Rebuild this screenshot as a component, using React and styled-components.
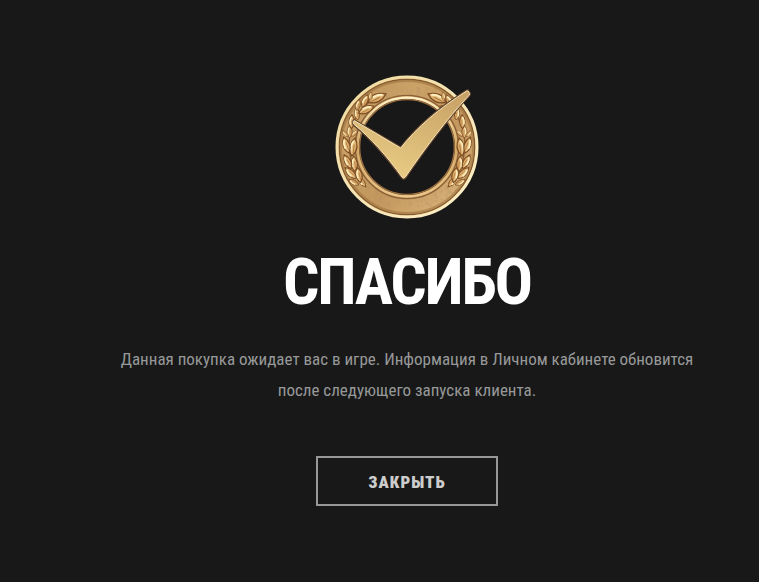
import React from "react";
import styled, { createGlobalStyle } from "styled-components";

const GlobalStyle = createGlobalStyle`
  *,
  *::before,
  *::after {
    box-sizing: border-box;
  }
  body {
    margin: 0;
    background-color: #181818;
    font-family: "Roboto Condensed", Roboto, "Liberation Sans", sans-serif;
  }
`;

const StyledPage = styled.main`
  display: flex;
  flex-direction: column;
  align-items: center;
  min-height: 100vh;
  padding: 75px 0 72px 55px;
  text-align: center;
`;

const StyledEmblem = styled.svg`
  display: block;
  width: 144px;
  height: 144px;
`;

const StyledTitle = styled.h1`
  margin: 26px 0 0;
  font-size: 64px;
  font-weight: bold;
  line-height: 76px;
  letter-spacing: -2px;
  color: #ffffff;
  text-transform: uppercase;
`;

const StyledText = styled.p`
  max-width: 600px;
  margin: 23px 0 0;
  font-size: 17px;
  line-height: 31px;
  color: #979899;
`;

const StyledButton = styled.button`
  min-width: 182px;
  height: 50px;
  margin-top: 50px;
  padding: 2px 24px 0;
  border: 2px solid #979797;
  background: transparent;
  font-family: inherit;
  font-size: 17px;
  font-weight: 900;
  line-height: 20px;
  letter-spacing: 1px;
  color: #cccccc;
  text-transform: uppercase;
  cursor: pointer;

  &:hover {
    border-color: #ffffff;
    color: #ffffff;
  }
`;

// x, y, rotation and scale of every leaf on the left branch
const leaves = [
  [110, 350, -38, 0.9],
  [86, 352, -62, 0.8],
  [102, 330, -12, 1.1],
  [77, 324, -45, 1.1],
  [88, 296, -4, 1.1],
  [68, 290, -28, 1.1],
  [85, 246, 10, 1.3],
  [64, 240, -18, 1.2],
  [74, 200, 0, 0.9],
  [61, 206, -46, 0.6],
  [88, 206, 48, 0.6],
  [80, 170, 2, 1],
  [96, 146, -8, 0.9],
  [124, 134, 66, 1.2],
  [99, 120, 14, 0.8],
  [120, 108, 24, 1],
  [156, 99, 66, 1.4],
  [137, 94, 6, 0.6],
];

const Branch = () => (
  <g>
    <path
      d="M124 367 Q70 318 73 225 Q76 160 140 104"
      fill="none"
      stroke="#8d5f30"
      strokeWidth="4"
    />
    {leaves.map(([x, y, angle, scale]) => (
      <g
        key={`${x}-${y}`}
        transform={`translate(${x} ${y}) rotate(${angle}) scale(${scale})`}
      >
        <path
          d="M0 21 C-13 7 -9 -10 0 -21 C9 -10 13 7 0 21Z"
          fill="url(#leaf)"
          stroke="#7d4e24"
          strokeWidth="3"
        />
        <path
          d="M-5 8 Q-7 -5 -1 -14"
          fill="none"
          stroke="#fff0c0"
          strokeWidth="4"
        />
        <path d="M2 14 L1 -6" fill="none" stroke="#ae783c" strokeWidth="2" />
      </g>
    ))}
  </g>
);

const Emblem = () => (
  <StyledEmblem viewBox="30 30 432 432" aria-hidden="true">
    <defs>
      <linearGradient id="metal" x1="0" y1="0" x2="1" y2="1">
        <stop offset="0" stopColor="#c0965d" />
        <stop offset="0.3" stopColor="#cba267" />
        <stop offset="0.6" stopColor="#c4975d" />
        <stop offset="1" stopColor="#dab67e" />
      </linearGradient>
      <linearGradient id="rim" x1="0" y1="0" x2="1" y2="1">
        <stop offset="0" stopColor="#f0d99d" />
        <stop offset="0.5" stopColor="#f5e4b5" />
        <stop offset="1" stopColor="#fff0c7" />
      </linearGradient>
      <linearGradient id="innerRim" x1="0" y1="0" x2="0" y2="1">
        <stop offset="0" stopColor="#fff0c4" />
        <stop offset="0.5" stopColor="#d5a965" />
        <stop offset="1" stopColor="#e9c68a" />
      </linearGradient>
      <linearGradient id="leaf" x1="0" y1="0" x2="1" y2="0">
        <stop offset="0" stopColor="#f8dca0" />
        <stop offset="1" stopColor="#d09a58" />
      </linearGradient>
      <linearGradient id="tick" x1="0.8" y1="0" x2="0.4" y2="1">
        <stop offset="0" stopColor="#c9a267" />
        <stop offset="0.5" stopColor="#d8b775" />
        <stop offset="1" stopColor="#e8cb83" />
      </linearGradient>
      <filter id="grain" x="0" y="0" width="1" height="1">
        <feTurbulence
          type="fractalNoise"
          baseFrequency="0.08"
          numOctaves="2"
          seed="4"
        />
        <feColorMatrix values="0 0 0 0 0.45  0 0 0 0 0.28  0 0 0 0 0.12  0 0 0 1.2 -0.5" />
        <feComposite in2="SourceGraphic" operator="in" />
      </filter>
    </defs>

    <g fill="none">
      <circle cx="246" cy="246" r="178" stroke="url(#metal)" strokeWidth="68" />
      <circle
        cx="246"
        cy="246"
        r="178"
        stroke="#000000"
        strokeWidth="60"
        filter="url(#grain)"
      />
      <circle
        cx="246"
        cy="246"
        r="198"
        stroke="#976a37"
        strokeOpacity="0.5"
        strokeWidth="6"
      />
      <circle cx="246" cy="246" r="203" stroke="#845a2c" strokeWidth="4" />
      <circle cx="246" cy="246" r="210" stroke="url(#rim)" strokeWidth="9" />
      <circle cx="246" cy="246" r="155" stroke="#8a5f34" strokeWidth="4" />
      <circle
        cx="246"
        cy="246"
        r="148"
        stroke="url(#innerRim)"
        strokeWidth="7"
      />
      <circle cx="246" cy="246" r="142" stroke="#9c6f3f" strokeWidth="4" />
    </g>

    <Branch />
    <g transform="translate(492 0) scale(-1 1)">
      <Branch />
    </g>

    <path
      d="M91 166 L227 246 C275 185 340 128 424 76 L429 75 L436 85 L434 92 C366 165 302 252 243 338 Q236 347 229 338 C184 276 137 222 85 180 L82 171 L86 165Z"
      fill="#63452b"
      stroke="#63452b"
      strokeWidth="4"
      strokeLinejoin="round"
    />
    <path
      d="M90 168 L227 249 C275 188 341 131 425 78 L429 78 L434 86 L432 91 C364 164 300 250 241 336 Q236 343 231 336 C186 274 139 220 87 178 L84 171 L87 167Z"
      fill="url(#tick)"
      stroke="#f7e6ba"
      strokeWidth="3"
      strokeLinejoin="round"
    />
  </StyledEmblem>
);

const App = () => {
  return (
    <>
      <GlobalStyle />
      <StyledPage>
        <Emblem />
        <StyledTitle>Спасибо</StyledTitle>
        <StyledText>
          Данная покупка ожидает вас в игре. Информация в Личном кабинете
          обновится после следующего запуска клиента.
        </StyledText>
        <StyledButton type="button">Закрыть</StyledButton>
      </StyledPage>
    </>
  );
};

export default App;
